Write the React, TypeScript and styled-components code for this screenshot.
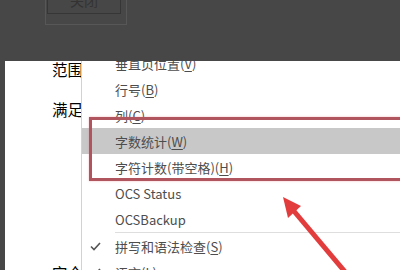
import styled, { createGlobalStyle } from 'styled-components';

const GlobalStyle = createGlobalStyle`
  html, body {
    margin: 0;
    padding: 0;
    background: #474747;
  }
`;

const FONT = `"Noto Sans CJK SC", "Noto Sans", "Liberation Sans", sans-serif`;

const Page = styled.div`
  position: relative;
  width: 400px;
  height: 270px;
  overflow: hidden;
  background: #474747;
  display: flex;
  flex-direction: column;
  font-family: ${FONT};
`;

const TopBar = styled.div`
  height: 61px;
  flex-shrink: 0;
  padding-left: 45px;
  box-sizing: border-box;
  overflow: hidden;
`;

const ButtonFrame = styled.div`
  width: 82px;
  height: 40px;
  margin-top: -15px;
  border: 1px solid #575757;
  border-top: none;
  box-sizing: border-box;
  padding: 1px 0 0 1px;
`;

const CloseButton = styled.div`
  width: 74px;
  height: 28px;
  box-sizing: border-box;
  border: 1px solid #363636;
  display: flex;
  align-items: flex-start;
  justify-content: center;
  color: #333333;
  font-size: 14px;
  line-height: 14px;
  padding-top: 6px;
`;

const Body = styled.div`
  flex: 1;
  display: flex;
  padding-left: 5px;
  min-height: 0;
`;

const Panel = styled.div`
  flex: 1;
  display: flex;
  background: #ffffff;
  overflow: hidden;
`;

const Labels = styled.div`
  width: 76px;
  flex-shrink: 0;
  padding-left: 47px;
  box-sizing: border-box;
  display: flex;
  flex-direction: column;
`;

const Label = styled.div<{ $gap: number }>`
  margin-top: ${({ $gap }) => $gap}px;
  font-size: 15.5px;
  line-height: 20px;
  color: #000;
  white-space: nowrap;
`;

const Menu = styled.div`
  position: relative;
  flex: 1;
  margin-top: -11px;
  border-left: 1px solid #d2d2d2;
  background: #ffffff;
  display: flex;
  flex-direction: column;
`;

const Item = styled.div<{ $active?: boolean }>`
  height: 26px;
  flex-shrink: 0;
  display: flex;
  align-items: center;
  background: ${({ $active }) => ($active ? '#c8c8c9' : 'transparent')};
  color: #4d4d4d;
  font-size: 13px;
  white-space: nowrap;

  u {
    text-decoration-thickness: 1px;
    text-underline-offset: 2px;
  }
`;

const CheckSlot = styled.span`
  width: 33px;
  flex-shrink: 0;
  display: flex;
  padding-left: 8px;
  box-sizing: border-box;
`;

const Separator = styled.div`
  height: 1px;
  flex-shrink: 0;
  margin-left: 33px;
  background: #dedede;
`;

const Highlight = styled.div`
  position: absolute;
  left: 7px;
  top: 67px;
  width: 340px;
  height: 64px;
  box-sizing: border-box;
  border: 3px solid #b0555e;
  box-shadow: 0 0 2px rgba(230, 120, 130, 0.5);
  pointer-events: none;
`;

const ArrowLayer = styled.svg`
  position: absolute;
  left: 0;
  top: 0;
  width: 400px;
  height: 270px;
  pointer-events: none;
`;

const Check = () => (
  <svg width="11" height="9" viewBox="0 0 11 9">
    <polyline points="1,4.5 4,7.5 10,1" fill="none" stroke="#555" strokeWidth="1.6" />
  </svg>
);

type Entry = { label: React.ReactNode; checked?: boolean; active?: boolean; sepBefore?: boolean };

const entries: Entry[] = [
  { label: <>垂直页位置(<u>V</u>)</> },
  { label: <>行号(<u>B</u>)</> },
  { label: <>列(<u>C</u>)</> },
  { label: <>字数统计(<u>W</u>)</>, active: true },
  { label: <>字符计数(带空格)(<u>H</u>)</> },
  { label: 'OCS Status' },
  { label: 'OCSBackup' },
  { label: <>拼写和语法检查(<u>S</u>)</>, checked: true, sepBefore: true },
  { label: <>语言(<u>L</u>)</>, checked: true },
];

export default function App() {
  return (
    <>
      <GlobalStyle />
      <Page>
        <TopBar>
          <ButtonFrame>
            <CloseButton>关闭</CloseButton>
          </ButtonFrame>
        </TopBar>
        <Body>
          <Panel>
            <Labels>
              <Label $gap={-2}>范围</Label>
              <Label $gap={20}>满足</Label>
              <Label $gap={144}>完全</Label>
            </Labels>
            <Menu>
              {entries.map((e, i) => (
                <div key={i} style={{ display: 'contents' }}>
                  {e.sepBefore && <Separator />}
                  <Item $active={e.active}>
                    <CheckSlot>{e.checked && <Check />}</CheckSlot>
                    <span>{e.label}</span>
                  </Item>
                </div>
              ))}
              <Highlight />
            </Menu>
          </Panel>
        </Body>
        <ArrowLayer viewBox="0 0 400 270">
          <line x1="293" y1="210" x2="362" y2="292" stroke="#e23c3c" strokeWidth="5" />
          <polygon points="283,197 301,206 288,218" fill="#e23c3c" />
        </ArrowLayer>
      </Page>
    </>
  );
}
